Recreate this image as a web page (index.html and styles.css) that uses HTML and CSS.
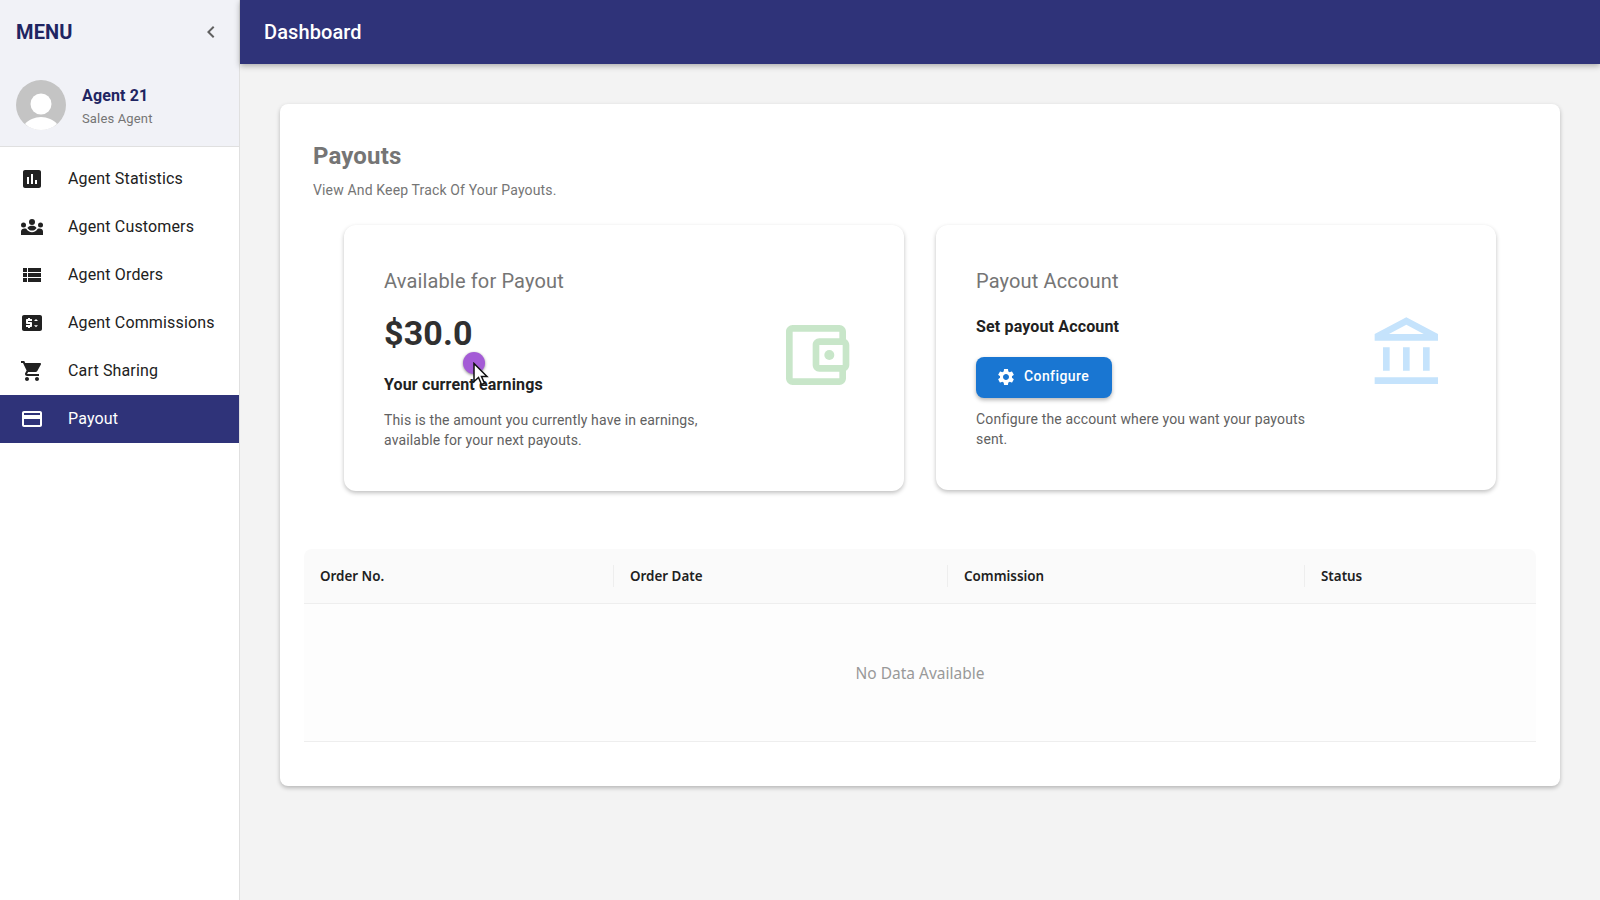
FILE: index.html
```html
<!DOCTYPE html>
<html lang="en">
<head>
  <meta charset="UTF-8">
  <title>Dashboard</title>
  <link rel="stylesheet" href="styles.css">
</head>
<body>
  <aside class="sidebar">
    <div class="side-head">
      <div class="menu-row">
        <span class="menu-title">MENU</span>
        <svg class="chevron" viewBox="0 0 24 24"><path d="M15.41 7.41 14 6l-6 6 6 6 1.41-1.41L10.83 12z"/></svg>
      </div>
      <div class="profile">
        <svg class="avatar" viewBox="0 0 50 50">
          <circle cx="25" cy="25" r="25" fill="#c4c4c4"/>
          <circle cx="25" cy="24" r="10.5" fill="#fff"/>
          <path d="M9 44c3-4 10-7 16-7s13 3 16 7c-4.500 4-10 6-16 6s-11.500-2-16-6z" fill="#fff"/>
        </svg>
        <div>
          <div class="agent-name">Agent 21</div>
          <div class="agent-role">Sales Agent</div>
        </div>
      </div>
    </div>
    <nav class="nav">
      <a class="nav-item">
        <svg class="nav-icon" viewBox="0 0 24 24"><path d="M19 3H5c-1.100 0-2 .9-2 2v14c0 1.100.9 2 2 2h14c1.100 0 2-.9 2-2V5c0-1.100-.9-2-2-2zM9 17H7v-7h2v7zm4 0h-2V7h2v10zm4 0h-2v-4h2v4z"/></svg>
        Agent Statistics
      </a>
      <a class="nav-item">
        <svg class="nav-icon" viewBox="0 0 24 24">
          <circle cx="12" cy="7" r="3"/>
          <circle cx="3.500" cy="10" r="2.500"/>
          <circle cx="20.500" cy="10" r="2.500"/>
          <path d="M8 12.200c1-1 2.600-1.400 4-1.400s3 .4 4 1.400l.6.7c-1 1.600-2.800 2.700-4.600 2.700s-3.600-1.100-4.600-2.700z"/>
          <path d="M1 20v-3.500c0-1.700 1.500-3 3.500-3h.8l1 .2c1.300 2 3.300 3.500 5.700 3.500s4.400-1.500 5.700-3.500l1-.2h.8c2 0 3.500 1.300 3.500 3V20z"/>
        </svg>
        Agent Customers
      </a>
      <a class="nav-item">
        <svg class="nav-icon" viewBox="0 0 24 24"><path d="M3 14h4v-4H3v4zm0 5h4v-4H3v4zM3 9h4V5H3v4zm5 5h13v-4H8v4zm0 5h13v-4H8v4zM8 5v4h13V5H8z"/></svg>
        Agent Orders
      </a>
      <a class="nav-item">
        <svg class="nav-icon" viewBox="0 0 24 24"><path d="M20 4H4c-1.110 0-1.990.89-1.990 2L2 18c0 1.110.89 2 2 2h16c1.110 0 2-.89 2-2V6c0-1.110-.89-2-2-2zm-8 6H8v1h3c.55 0 1 .45 1 1v3c0 .55-.45 1-1 1h-1v1H8v-1H6v-2h4v-1H7c-.55 0-1-.45-1-1V9c0-.55.45-1 1-1h1V7h2v1h2v2zm4 6.250-2-2h4l-2 2zM14 10l2-2 2 2h-4z"/></svg>
        Agent Commissions
      </a>
      <a class="nav-item">
        <svg class="nav-icon" viewBox="0 0 24 24"><path d="M7 18c-1.100 0-1.990.9-1.990 2S5.900 22 7 22s2-.9 2-2-.9-2-2-2zM1 2v2h2l3.600 7.590-1.350 2.450c-.16.28-.25.61-.25.96 0 1.100.9 2 2 2h12v-2H7.420c-.14 0-.25-.11-.25-.25l.03-.12.9-1.630h7.450c.75 0 1.410-.41 1.750-1.030l3.580-6.490c.08-.14.12-.31.12-.48 0-.55-.45-1-1-1H5.210l-.94-2H1zm16 16c-1.100 0-1.990.9-1.990 2s.89 2 1.990 2 2-.9 2-2-.9-2-2-2z"/></svg>
        Cart Sharing
      </a>
      <a class="nav-item active">
        <svg class="nav-icon" viewBox="0 0 24 24"><path d="M20 4H4c-1.110 0-1.990.89-1.990 2L2 18c0 1.110.89 2 2 2h16c1.110 0 2-.89 2-2V6c0-1.110-.89-2-2-2zm0 14H4v-6h16v6zm0-10H4V6h16v2z"/></svg>
        Payout
      </a>
    </nav>
  </aside>

  <div class="content">
    <header class="appbar">Dashboard</header>
    <main class="main">
      <section class="paper">
        <h1 class="page-title">Payouts</h1>
        <p class="page-sub">View And Keep Track Of Your Payouts.</p>

        <div class="cards">
          <div class="card">
            <div class="card-text">
              <h2 class="card-title">Available for Payout</h2>
              <div class="amount">$30.0</div>
              <div class="card-label earnings">Your current earnings</div>
              <p class="card-desc">This is the amount you currently have in earnings, available for your next payouts.</p>
            </div>
            <svg class="card-icon wallet" viewBox="0 0 24 24">
              <path d="M21 7.280V5c0-1.100-.9-2-2-2H5c-1.110 0-2 .9-2 2v14c0 1.100.89 2 2 2h14c1.100 0 2-.9 2-2v-2.280c.59-.35 1-.98 1-1.720V9c0-.74-.41-1.370-1-1.720zM20 9v6h-7V9h7zM5 19V5h14v2h-6c-1.100 0-2 .9-2 2v6c0 1.100.9 2 2 2h6v2H5z"/>
              <circle cx="16" cy="12" r="1.500"/>
            </svg>
          </div>
          <div class="card account-card">
            <div class="card-text">
              <h2 class="card-title">Payout Account</h2>
              <div class="card-label account">Set payout Account</div>
              <button class="btn">
                <svg class="btn-icon" viewBox="0 0 24 24"><path d="M19.140 12.940c.04-.3.06-.61.06-.94 0-.32-.02-.64-.07-.94l2.030-1.580c.18-.14.23-.41.12-.61l-1.920-3.320c-.12-.22-.37-.29-.59-.22l-2.390.96c-.5-.38-1.030-.7-1.620-.94l-.36-2.540c-.04-.24-.24-.41-.48-.41h-3.840c-.24 0-.43.17-.47.41l-.36 2.540c-.59.24-1.130.57-1.620.94l-2.390-.96c-.22-.08-.47 0-.59.22L2.740 8.870c-.12.21-.08.47.12.61l2.030 1.580c-.05.3-.09.63-.09.94s.02.64.07.94l-2.030 1.580c-.18.14-.23.41-.12.61l1.920 3.320c.12.22.37.29.59.22l2.390-.96c.5.38 1.030.7 1.620.94l.36 2.540c.05.24.24.41.48.41h3.840c.24 0 .44-.17.47-.41l.36-2.540c.59-.24 1.130-.56 1.620-.94l2.390.96c.22.08.47 0 .59-.22l1.920-3.320c.12-.22.07-.47-.12-.61l-2.010-1.580zM12 15.600c-1.980 0-3.600-1.620-3.600-3.600s1.620-3.600 3.600-3.600 3.600 1.620 3.600 3.600-1.620 3.600-3.600 3.600z"/></svg>
                Configure
              </button>
              <p class="card-desc">Configure the account where you want your payouts sent.</p>
            </div>
            <svg class="card-icon bank" viewBox="0 0 24 24"><path d="M6.500 10h-2v7h2v-7zm6 0h-2v7h2v-7zm8.500 9H2v2h19v-2zm-2.500-9h-2v7h2v-7zm-7-6.740L16.710 6H6.290l5.210-2.740m0-2.260L2 6v2h19V6l-9.500-5z"/></svg>
          </div>
        </div>

        <div class="grid-table">
          <div class="grid-head">
            <div class="grid-col">Order No.</div>
            <div class="grid-col">Order Date</div>
            <div class="grid-col">Commission</div>
            <div class="grid-col">Status</div>
          </div>
          <div class="grid-empty">No Data Available</div>
        </div>
      </section>
    </main>
  </div>

  <div class="pointer">
    <span class="pointer-dot"></span>
    <svg class="pointer-arrow" viewBox="0 0 16 24"><path d="M1 1v18l4.500-4 3 7 3-1.300-3-6.700H14z"/></svg>
  </div>
</body>
</html>
```

FILE: styles.css
```css
* {
  box-sizing: border-box;
}

body {
  margin: 0;
  height: 100vh;
  display: flex;
  overflow: hidden;
  font-family: Roboto, Arial, sans-serif;
  letter-spacing: 0.15px;
  background: #f3f3f3;
  color: #212121;
}

.sidebar {
  width: 240px;
  flex-shrink: 0;
  background: #fff;
  border-right: 1px solid #e0e0e0;
}

.side-head {
  height: 147px;
  background: #f1f2f7;
  border-bottom: 1px solid #e0e0e0;
  padding: 0 16px;
}

.menu-row {
  height: 64px;
  display: flex;
  align-items: center;
  justify-content: space-between;
}

.menu-title {
  font-size: 20px;
  font-weight: 700;
  color: #1f2562;
}

.chevron {
  width: 24px;
  height: 24px;
  fill: #616161;
}

.profile {
  margin-top: 16px;
  display: flex;
  align-items: center;
  gap: 16px;
}

.avatar {
  width: 50px;
  height: 50px;
}

.agent-name {
  margin-top: 3px;
  font-size: 16px;
  font-weight: 700;
  line-height: 24px;
  color: #1f2562;
}

.agent-role {
  font-size: 13px;
  line-height: 22px;
  color: #757575;
}

.nav {
  padding-top: 8px;
}

.nav-item {
  height: 48px;
  display: flex;
  align-items: center;
  padding: 0 0 2px 20px;
  font-size: 16px;
  color: #212121;
}

.nav-icon {
  width: 24px;
  height: 24px;
  margin: 0 24px -2px 0;
  fill: #212121;
}

.nav-item.active {
  background: #2f3379;
  color: #fff;
}

.nav-item.active .nav-icon {
  fill: #fff;
}

.content {
  flex: 1;
  min-width: 0;
}

.appbar {
  height: 64px;
  display: flex;
  align-items: center;
  padding-left: 24px;
  background: #2f3379;
  color: #fff;
  font-size: 20px;
  font-weight: 500;
  letter-spacing: 0.1px;
  box-shadow: 0 2px 6px rgba(0, 0, 0, 0.3);
}

.main {
  padding: 40px;
}

.paper {
  height: 682px;
  padding: 24px;
  background: #fff;
  border-radius: 8px;
  box-shadow: 0 2px 4px rgba(0, 0, 0, 0.25);
}

.page-title {
  margin: 10px 0 0 9px;
  font-size: 24px;
  line-height: 36px;
  font-weight: 700;
  color: #757575;
}

.page-sub {
  margin: 6px 0 0 9px;
  font-size: 14px;
  line-height: 20px;
  color: #757575;
}

.cards {
  margin: 25px 40px 0;
  display: grid;
  grid-template-columns: 1fr 1fr;
  align-items: start;
  gap: 32px;
}

.card {
  height: 266px;
  padding: 40px 48px 0 40px;
  display: flex;
  justify-content: space-between;
  background: #fff;
  border-radius: 12px;
  box-shadow: 0 2px 4px rgba(0, 0, 0, 0.25);
}

.account-card {
  height: 265px;
}

.card-text {
  width: 336px;
}

.card-title {
  margin: 0;
  font-size: 20px;
  line-height: 32px;
  font-weight: 400;
  color: #757575;
}

.amount {
  margin-top: 14px;
  font-size: 34px;
  line-height: 44px;
  font-weight: 700;
  color: #303030;
}

.card-label {
  font-size: 16px;
  line-height: 24px;
  font-weight: 700;
}

.earnings {
  margin-top: 18px;
}

.account {
  margin-top: 18px;
}

.card-desc {
  margin: 11px 0 0;
  font-size: 14px;
  line-height: 20px;
  color: #616161;
}

.earnings + .card-desc {
  margin-top: 13px;
}

.btn {
  margin-top: 18px;
  height: 41px;
  padding: 0 23px 3px 20px;
  display: flex;
  align-items: center;
  gap: 8px;
  border: none;
  border-radius: 8px;
  background: #1976d2;
  color: #fff;
  font-family: inherit;
  font-size: 14px;
  font-weight: 500;
  letter-spacing: 0.4px;
  box-shadow: 0 2px 4px rgba(0, 0, 0, 0.3);
}

.btn-icon {
  width: 20px;
  height: 20px;
  margin-top: 2px;
  fill: #fff;
}

.card-icon {
  width: 80px;
  height: 80px;
  margin-top: 50px;
}

.wallet {
  fill: #c8e6c9;
}

.bank {
  margin-top: 49px;
  fill: #c5e3fc;
}

.grid-table {
  margin-top: 58px;
}

.grid-head {
  height: 55px;
  display: grid;
  grid-template-columns: 309px 334px 357px 232px;
  align-items: center;
  background: #fafafa;
  border-bottom: 1px solid #eeeeee;
  border-radius: 8px 8px 0 0;
}

.grid-col {
  height: 22px;
  padding-left: 16px;
  border-left: 1px solid #eeeeee;
  font-family: "Noto Sans", sans-serif;
  font-size: 13.400px;
  line-height: 22px;
  font-weight: 600;
  letter-spacing: 0;
  color: #212121;
}

.grid-col:first-child {
  border-left: none;
}

.grid-empty {
  height: 138px;
  display: flex;
  align-items: center;
  justify-content: center;
  background: #fdfdfd;
  border-bottom: 1px solid #eeeeee;
  font-family: "Noto Sans", sans-serif;
  font-size: 15.500px;
  letter-spacing: 0;
  color: #999999;
}

.pointer {
  position: absolute;
  left: 463px;
  top: 352px;
}

.pointer-dot {
  display: block;
  width: 22px;
  height: 22px;
  border-radius: 50%;
  background: #a45bd6;
  box-shadow: 0 1px 3px rgba(0, 0, 0, 0.45);
}

.pointer-arrow {
  position: absolute;
  left: 10px;
  top: 10px;
  width: 16px;
  height: 25px;
  fill: #fff;
  stroke: #111;
  stroke-width: 1.500;
}
```
